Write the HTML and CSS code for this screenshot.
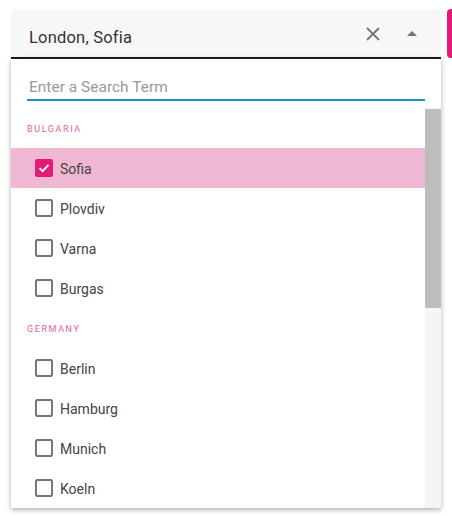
FILE: index.html
```html
<!DOCTYPE html>
<html>
<head>
<meta charset="utf-8">
<link rel="stylesheet" href="styles.css">
</head>
<body>
<div class="page">
  <div class="combo">
    <div class="field">
      <span class="value">London, Sofia</span>
      <span class="clear">
        <svg width="14" height="14" viewBox="0 0 14 14"><path d="M1 1L13 13M13 1L1 13" stroke="#757575" stroke-width="1.8" fill="none"/></svg>
      </span>
      <span class="caret">
        <svg width="10" height="5" viewBox="0 0 10 5"><path d="M0 5L5 0L10 5Z" fill="#757575"/></svg>
      </span>
    </div>
    <div class="dropdown">
      <div class="search">
        <input class="search-input" type="text" placeholder="Enter a Search Term">
      </div>
      <div class="list-wrap">
        <div class="list">
          <div class="header"><span class="label">BULGARIA</span></div>
          <div class="item selected"><span class="box checked"><svg width="14" height="14" viewBox="0 0 14 14"><path d="M2.5 7.2L5.6 10.2L11.5 3.8" stroke="#fff" stroke-width="1.8" fill="none"/></svg></span><span class="label">Sofia</span></div>
          <div class="item"><span class="box"></span><span class="label">Plovdiv</span></div>
          <div class="item"><span class="box"></span><span class="label">Varna</span></div>
          <div class="item"><span class="box"></span><span class="label">Burgas</span></div>
          <div class="header"><span class="label">GERMANY</span></div>
          <div class="item"><span class="box"></span><span class="label">Berlin</span></div>
          <div class="item"><span class="box"></span><span class="label">Hamburg</span></div>
          <div class="item"><span class="box"></span><span class="label">Munich</span></div>
          <div class="item"><span class="box"></span><span class="label">Koeln</span></div>
        </div>
        <div class="scrollbar"><div class="thumb"></div></div>
      </div>
    </div>
  </div>
  <div class="side-button"></div>
</div>
</body>
</html>
```
FILE: styles.css
```css
html, body {
  margin: 0;
  padding: 0;
  background: #fff;
  overflow: hidden;
}
body {
  font-family: Roboto, "Noto Sans", sans-serif;
  color: #333;
}
.page {
  display: flex;
  gap: 6px;
  padding: 9px 0 0 11px;
  width: 452px;
  height: 516px;
  box-sizing: border-box;
  overflow: hidden;
}
.combo {
  width: 430px;
  flex-shrink: 0;
}
.side-button {
  width: 30px;
  height: 49px;
  flex-shrink: 0;
  background: #e41c77;
  border-radius: 4px 0 0 4px;
}
.field {
  background: #f7f7f7;
  border-bottom: 2px solid #1c1c1c;
  border-radius: 4px 4px 0 0;
  display: flex;
  align-items: center;
  padding: 8px 0 0 18px;
  height: 40px;
}
.value {
  flex: 1;
  font-size: 16.5px;
  color: #333;
  letter-spacing: 0.2px;
}
.clear {
  display: flex;
  width: 24px;
  justify-content: center;
  margin-right: 15px;
  margin-top: -6px;
}
.caret {
  display: flex;
  width: 24px;
  justify-content: center;
  margin-right: 17px;
  margin-top: -8px;
}
.dropdown {
  background: #fff;
  box-shadow: 0 2px 4px rgba(0,0,0,0.22), 0 1px 8px rgba(0,0,0,0.12);
  height: 449px;
  display: flex;
  flex-direction: column;
}
.search {
  height: 49px;
  padding: 18px 16px 0;
  box-sizing: border-box;
  flex-shrink: 0;
}
.search-input {
  display: block;
  width: 100%;
  border: none;
  border-bottom: 2px solid #1e90d2;
  outline: none;
  font-family: inherit;
  font-size: 15.5px;
  padding: 0 2px 2px;
  height: 24px;
  box-sizing: border-box;
  background: transparent;
}
.search-input::placeholder {
  color: #9a9a9a;
}
.list-wrap {
  flex: 1;
  display: flex;
  min-height: 0;
}
.list {
  flex: 1;
  overflow: hidden;
}
.scrollbar {
  width: 16px;
  background: #f5f5f5;
  padding-top: 1px;
  flex-shrink: 0;
}
.thumb {
  height: 199px;
  background: #bdbdbd;
}
.header {
  height: 40px;
  display: flex;
  align-items: center;
  padding-left: 16px;
  font-size: 9px;
  letter-spacing: 1.6px;
  color: #e2609f;
}
.item {
  height: 40px;
  display: flex;
  align-items: center;
  padding-left: 24px;
  font-size: 14px;
  color: #444;
}
.label {
  padding-top: 2px;
}
.item.selected {
  background: #efb7d1;
}
.box {
  width: 14px;
  height: 14px;
  border: 2px solid #767676;
  border-radius: 2px;
  margin-right: 7px;
  display: flex;
  align-items: center;
  justify-content: center;
}
.box.checked {
  background: #e41c77;
  border-color: #e41c77;
}
```
